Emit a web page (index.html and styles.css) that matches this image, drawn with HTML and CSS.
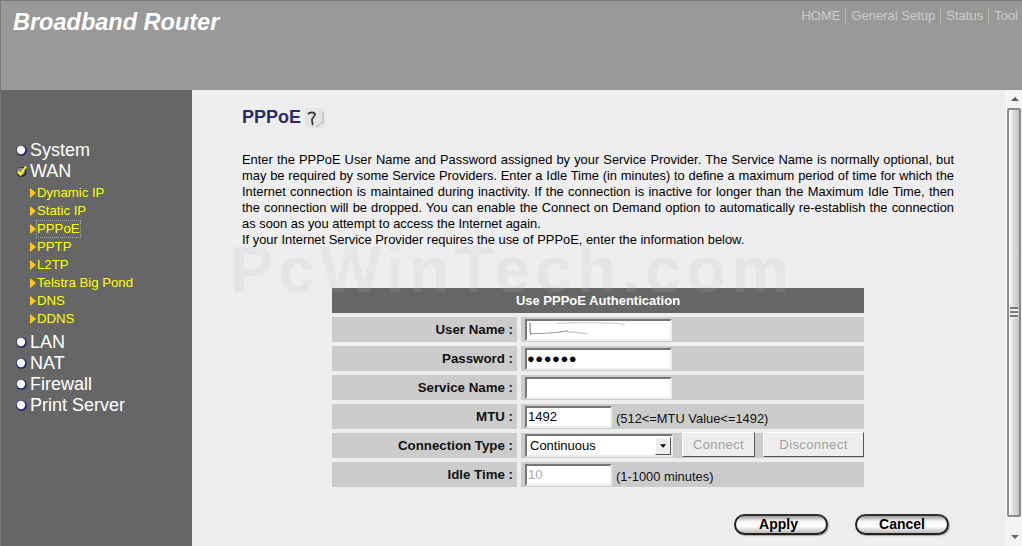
FILE: index.html
```html
<!DOCTYPE html>
<html lang="en">
<head>
<meta charset="utf-8">
<title>Broadband Router</title>
<link rel="stylesheet" href="styles.css">
</head>
<body>
<div class="app">
  <header class="top">
    <div class="brand">Broadband Router</div>
    <nav class="topnav"><span>HOME</span><i></i><span>General Setup</span><i></i><span>Status</span><i></i><span>Tool</span></nav>
  </header>
  <div class="main">
    <aside class="side">
      <ul class="menu">
        <li class="m"><svg class="bul" viewBox="0 0 11 11"><circle cx="5.500" cy="5.500" r="5.300" fill="#22227a"/><circle cx="5" cy="5" r="4.200" fill="#fff"/></svg>System</li>
        <li class="m"><svg class="bul" viewBox="0 0 11 11"><circle cx="5.500" cy="6" r="5" fill="#22227a"/><circle cx="5" cy="5.500" r="3.800" fill="#8f8f8f"/><path d="M2 5.500l2.500 3L10 .5" fill="none" stroke="#ff0" stroke-width="2"/></svg>WAN</li>
        <li class="s first"><svg class="tri" viewBox="0 0 6 10"><path d="M0 0l6 5-6 5z" fill="#ffc81e"/></svg>Dynamic IP</li>
        <li class="s"><svg class="tri" viewBox="0 0 6 10"><path d="M0 0l6 5-6 5z" fill="#ffc81e"/></svg>Static IP</li>
        <li class="s"><svg class="tri" viewBox="0 0 6 10"><path d="M0 0l6 5-6 5z" fill="#ffc81e"/></svg><span class="focus">PPPoE</span></li>
        <li class="s"><svg class="tri" viewBox="0 0 6 10"><path d="M0 0l6 5-6 5z" fill="#ffc81e"/></svg>PPTP</li>
        <li class="s"><svg class="tri" viewBox="0 0 6 10"><path d="M0 0l6 5-6 5z" fill="#ffc81e"/></svg>L2TP</li>
        <li class="s"><svg class="tri" viewBox="0 0 6 10"><path d="M0 0l6 5-6 5z" fill="#ffc81e"/></svg>Telstra Big Pond</li>
        <li class="s"><svg class="tri" viewBox="0 0 6 10"><path d="M0 0l6 5-6 5z" fill="#ffc81e"/></svg>DNS</li>
        <li class="s last"><svg class="tri" viewBox="0 0 6 10"><path d="M0 0l6 5-6 5z" fill="#ffc81e"/></svg>DDNS</li>
        <li class="m"><svg class="bul" viewBox="0 0 11 11"><circle cx="5.500" cy="5.500" r="5.300" fill="#22227a"/><circle cx="5" cy="5" r="4.200" fill="#fff"/></svg>LAN</li>
        <li class="m"><svg class="bul" viewBox="0 0 11 11"><circle cx="5.500" cy="5.500" r="5.300" fill="#22227a"/><circle cx="5" cy="5" r="4.200" fill="#fff"/></svg>NAT</li>
        <li class="m"><svg class="bul" viewBox="0 0 11 11"><circle cx="5.500" cy="5.500" r="5.300" fill="#22227a"/><circle cx="5" cy="5" r="4.200" fill="#fff"/></svg>Firewall</li>
        <li class="m"><svg class="bul" viewBox="0 0 11 11"><circle cx="5.500" cy="5.500" r="5.300" fill="#22227a"/><circle cx="5" cy="5" r="4.200" fill="#fff"/></svg>Print Server</li>
      </ul>
    </aside>
    <main class="content">
      <h1 class="title">PPPoE <span class="help"><svg viewBox="0 0 20 20"><path d="M18 4v9q0 2-3 3l-4 3" fill="none" stroke="#bdbdbd" stroke-width="1.200"/><path d="M3 6c2-2 6-2 7 0 0 3-4 4-3 7 1 2 0 3 1 4" fill="none" stroke="#3c3c3c" stroke-width="1.800"/></svg></span></h1>
      <p class="intro">Enter the PPPoE User Name and Password assigned by your Service Provider. The Service Name is normally optional, but may be required by some Service Providers. Enter a Idle Time (in minutes) to define a maximum period of time for which the Internet connection is maintained during inactivity. If the connection is inactive for longer than the Maximum Idle Time, then the connection will be dropped. You can enable the Connect on Demand option to automatically re-establish the connection as soon as you attempt to access the Internet again.<br>If your Internet Service Provider requires the use of PPPoE, enter the information below.</p>
      <form class="form">
        <div class="fhead">Use PPPoE Authentication</div>
        <label class="lab">User Name :</label>
        <div class="val"><span class="inp long smudged"><svg viewBox="0 0 146 22" preserveAspectRatio="none"><path d="M0 0h146v2c-30-2-60-1-95 1-8 6-22 8-46 7-3 3-3 5-2 8H0z" fill="#fff"/><path d="M3 2c0 5 0 11 1 15M4 15c15 1 30-1 38-3" fill="none" stroke="#999" stroke-width="1.400"/><path d="M30 3c25-2 55-1 70 1" fill="none" stroke="#d5d5d5" stroke-width="1.500"/><path d="M42 14c8-2 12 2 20 1" fill="none" stroke="#bbb" stroke-width="1.200"/></svg></span></div>
        <label class="lab">Password :</label>
        <div class="val"><span class="inp long dots">●●●●●●</span></div>
        <label class="lab">Service Name :</label>
        <div class="val"><span class="inp long"></span></div>
        <label class="lab">MTU :</label>
        <div class="val"><span class="inp short">1492</span><span class="hint">(512&lt;=MTU Value&lt;=1492)</span></div>
        <label class="lab">Connection Type :</label>
        <div class="val"><span class="sel">Continuous<span class="drop"><svg viewBox="0 0 8 4"><path d="M0 0h7L3.500 4z" fill="#000"/></svg></span></span><span class="btn b1">Connect</span><span class="btn b2">Disconnect</span></div>
        <label class="lab">Idle Time :</label>
        <div class="val"><span class="inp short off">10</span><span class="hint">(1-1000 minutes)</span></div>
      </form>
      <div class="actions"><span class="pill apply">Apply</span><span class="pill">Cancel</span></div>
      <div class="wm">PcWinTech.com</div>
    </main>
    <div class="sb">
      <div class="sb-a"><svg viewBox="0 0 8 4"><path d="M4 0l4 4H0z" fill="#555"/></svg></div>
      <div class="sb-t"><span class="grip"></span></div>
      <div class="sb-a sb-d"><svg viewBox="0 0 8 4"><path d="M0 0h8L4 4z" fill="#666"/></svg></div>
    </div>
  </div>
</div>
</body>
</html>
```
FILE: styles.css
```css
* { box-sizing: border-box; }
html, body { margin: 0; padding: 0; height: 100%; overflow: hidden; }
body { font-family: "Liberation Sans", Arial, sans-serif; background: #eee; color: #000; }
.app { width: 1022px; height: 546px; display: flex; flex-direction: column; overflow: hidden; }
.top { height: 90px; flex: none; background: #999; border-top: 1px solid #777; border-left: 1px solid #777; display: flex; justify-content: space-between; overflow: hidden; }
.brand { color: #fff; font: italic bold 23.5px/28px "Liberation Sans", Arial, sans-serif; padding: 7px 0 0 12px; }
.topnav { display: flex; align-items: flex-start; color: #ccc; font-size: 13px; line-height: 16px; padding: 7px 4px 0 0; white-space: nowrap; }
.topnav i { width: 1px; height: 16px; background: #bcb6a4; margin: 0 5px; }
.main { flex: 1; display: flex; min-height: 0; position: relative; }
.side { width: 192px; flex: none; background: #666; border-left: 1px solid #777; padding-top: 50px; }
.menu { list-style: none; margin: 0; padding: 0; }
.m { height: 21px; line-height: 21px; font-size: 18px; color: #fff; display: flex; align-items: center; padding-left: 15px; }
.bul { width: 11px; height: 11px; margin-right: 3px; flex: none; }
.s { height: 18px; line-height: 18px; font-size: 13.2px; color: #ff0; display: flex; align-items: center; padding-left: 29px; }
.s.first { margin-top: 2px; }
.s.last { margin-bottom: 4px; }
.tri { width: 6px; height: 10px; margin-right: 1px; flex: none; }
.focus { outline: 1px dotted #aaa; line-height: 16px; }
.content { flex: 1; background: #eee; position: relative; padding: 0 52px 0 50px; min-width: 0; }
.title { margin: 0; padding-top: 17px; height: 51px; display: flex; align-items: flex-start; font-size: 18px; line-height: 20px; font-weight: bold; color: #2b2b66; }
.help { width: 20px; height: 20px; margin: 1px 0 0 4px; background: #e5e5e5; display: block; }
.help svg { width: 20px; height: 20px; display: block; }
.intro { margin: 11px 0 0; font-size: 12.9px; line-height: 16px; text-align: justify; width: 712px; }
.form { display: grid; grid-template-columns: 185px 343px; gap: 4px; margin: 40px 0 0 90px; width: 532px; }
.fhead { grid-column: 1 / -1; height: 25px; background: #666; color: #fff; font-size: 13px; line-height: 25px; font-weight: bold; text-align: center; }
.lab { height: 25px; background: #ccc; font-size: 13.3px; font-weight: bold; line-height: 26px; text-align: right; padding-right: 4px; color: #111; }
.val { height: 25px; background: #ccc; display: flex; align-items: center; padding-left: 4px; font-size: 13px; }
.inp { display: block; height: 22px; background: #fff; border: 2px solid; border-color: #777 #eee #eee #777; font-size: 13px; line-height: 18px; padding-left: 1px; overflow: hidden; }
.long { width: 147px; }
.short { width: 87px; }
.smudged { padding: 0; }
.smudged svg { width: 100%; height: 100%; display: block; }
.dots { font-size: 13px; letter-spacing: .5px; padding-left: 0; }
.off { color: #aaa; }
.hint { font-size: 12.9px; margin: 3px 0 0 4px; color: #111; }
.sel { position: relative; display: block; width: 148px; height: 23px; background: #fff; border: 2px solid; border-color: #777 #eee #eee #777; font-size: 13px; line-height: 20px; padding-left: 3px; }
.drop { position: absolute; right: 0; top: 1px; width: 16px; height: 18px; background: #eee; border: 1px solid; border-color: #fff #555 #555 #fff; display: flex; align-items: center; justify-content: center; }
.drop svg { width: 7px; height: 4px; }
.btn { height: 25px; align-self: flex-start; margin-top: -1px; background: #eee; border: 1px solid; border-color: #fff #555 #555 #fff; color: #a0a0a0; font-size: 13px; line-height: 23px; text-align: center; letter-spacing: .4px; }
.b1 { width: 73px; margin-left: 9px; }
.b2 { width: 101px; margin-left: 8px; }
.actions { display: flex; gap: 27px; margin: 27px 0 0 492px; }
.pill { width: 94px; height: 21px; border-radius: 11px; border: 2px solid #222; border-top-color: #333; background: linear-gradient(#999, #f4f4f4 30%, #fff 60%, #bbb); font-size: 14px; font-weight: bold; text-align: center; line-height: 16px; box-shadow: 1px 1px 1px #b5a79a; }
.apply { padding-right: 5px; }
.wm { position: absolute; left: 38px; top: 145px; font-size: 65px; font-weight: bold; line-height: 70px; letter-spacing: 5.2px; color: rgba(180,180,180,.15); white-space: nowrap; pointer-events: none; }
.sb { width: 16px; flex: none; background: #f4f4f4; border-left: 1px solid #fff; display: flex; flex-direction: column; }
.sb-a { height: 18px; flex: none; display: flex; align-items: center; justify-content: center; }
.sb-a svg { width: 8px; height: 4px; }
.sb-t { flex: 1; margin: 0 1px 11px 0; background: linear-gradient(90deg,#fff,#e4e4e4 35%,#c4c4c4); border: 2px solid #8a8a8a; border-radius: 2px; display: flex; align-items: center; justify-content: center; }
.grip { width: 8px; height: 11px; background: repeating-linear-gradient(#777 0 2px, #eee 2px 4px); }
```
